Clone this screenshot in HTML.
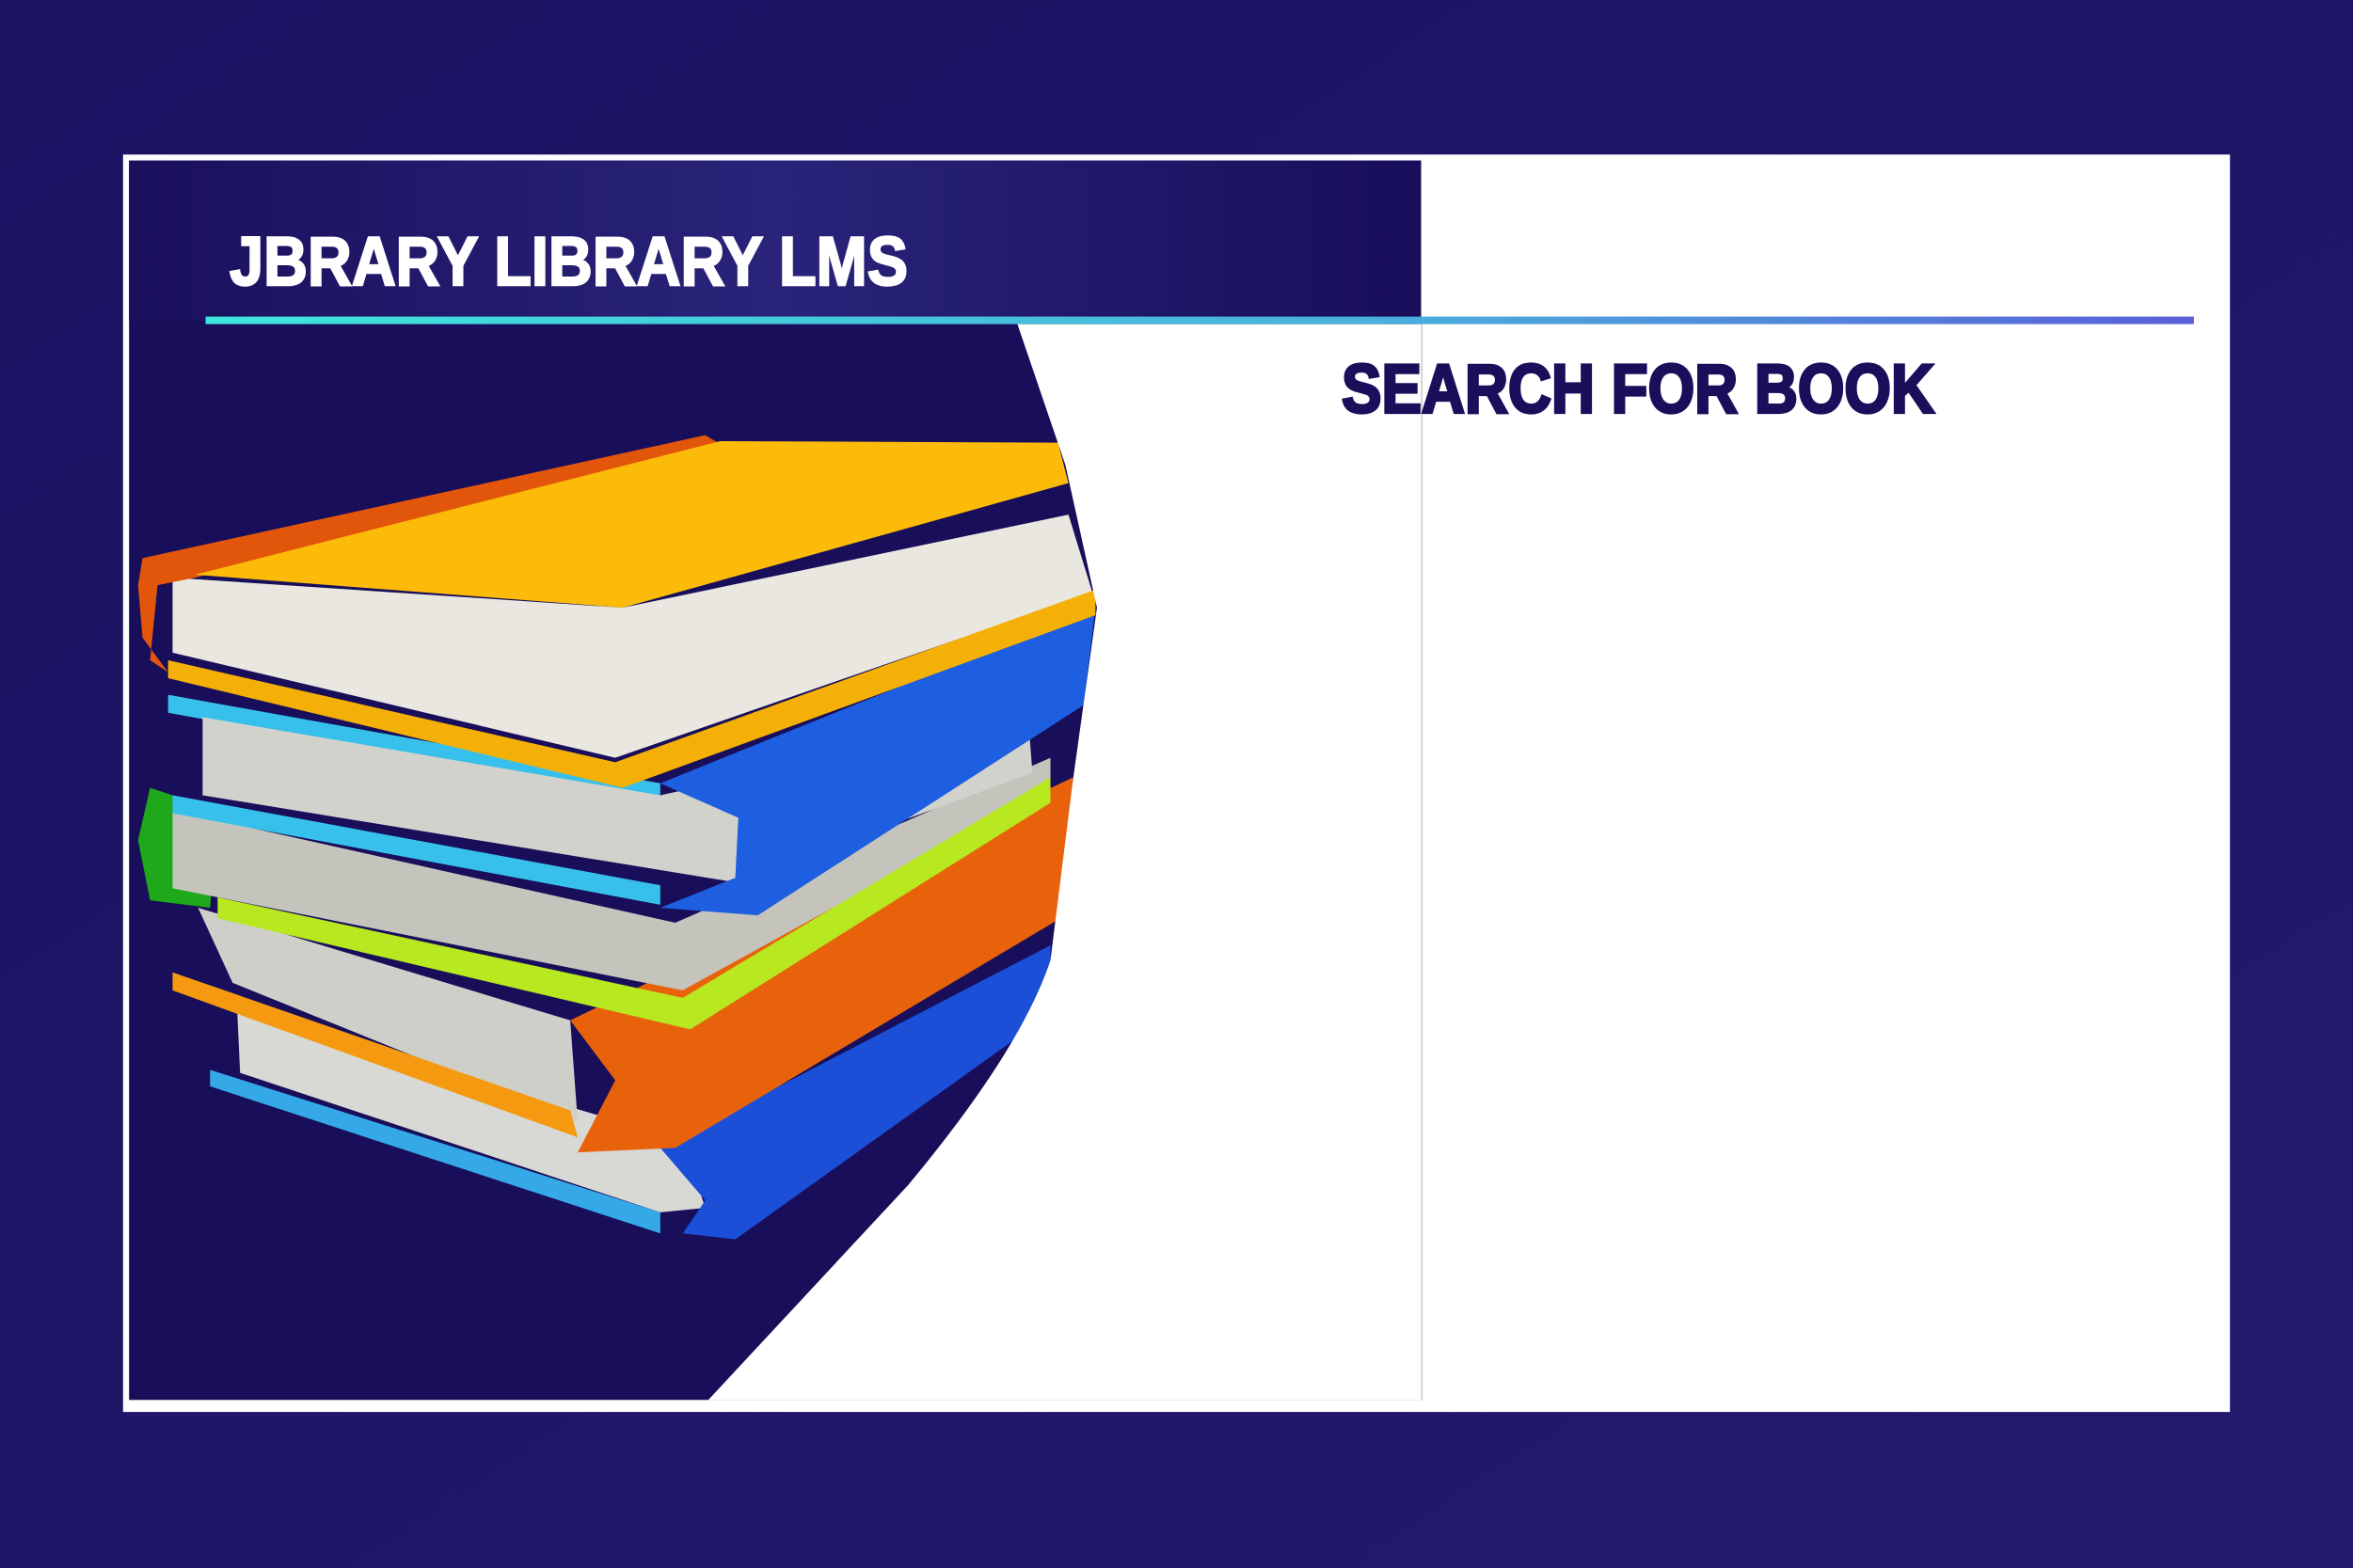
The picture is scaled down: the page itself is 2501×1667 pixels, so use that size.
<!DOCTYPE html>
<html><head><meta charset="utf-8"><style>
html,body{margin:0;padding:0;width:2501px;height:1667px;overflow:hidden;background:#1e1464}
svg{display:block}
</style></head><body>
<svg width="2501" height="1667" viewBox="0 0 1568 1045" preserveAspectRatio="none" xmlns="http://www.w3.org/2000/svg">
<defs>
<linearGradient id="bg" x1="0" y1="0" x2="1" y2="1"><stop offset="0" stop-color="#1c1262"/><stop offset="1" stop-color="#231a6e"/></linearGradient>
<linearGradient id="hd" x1="0" y1="0" x2="1" y2="0"><stop offset="0" stop-color="#1a105c"/><stop offset="0.5" stop-color="#29247a"/><stop offset="1" stop-color="#180e5a"/></linearGradient>
<linearGradient id="ln" x1="0" y1="0" x2="1" y2="0"><stop offset="0" stop-color="#3ee6dc"/><stop offset="0.6" stop-color="#4aaedc"/><stop offset="1" stop-color="#5a5fd8"/></linearGradient>
</defs>
<rect width="1568" height="1045" fill="url(#bg)"/>
<rect x="82" y="103" width="1404" height="838" fill="#fff"/>
<rect x="86" y="107" width="861" height="826" fill="#180e5a"/>
<rect x="86" y="107" width="861" height="107" fill="url(#hd)"/>
<line x1="947.5" y1="215" x2="947.5" y2="933" stroke="#ccc" stroke-width="1"/>
<g>
<polygon points="140,713 440,808 440,822 140,724" fill="#35a8e8"/>
<polygon points="158,672 455,760 470,805 440,808 160,715" fill="#d8d8d4"/>
<polygon points="440,765 700,630 700,650 680,690 490,826 455,822 470,800" fill="#1c4fd8"/>
<polygon points="132,605 380,680 385,748 155,655" fill="#cfcfca"/>
<polygon points="115,648 380,740 385,758 115,660" fill="#f59a10"/>
<polygon points="380,680 715,518 710,610 450,765 385,768 410,720" fill="#e8620c"/>
<polygon points="100,525 145,540 140,605 100,600 92,560" fill="#1ea81a"/>
<polygon points="115,540 450,615 700,505 700,525 455,660 115,592" fill="#c4c4bd"/>
<polygon points="145,598 455,665 700,518 700,535 460,686 145,612" fill="#b7e820"/>
<polygon points="112,463 440,522 440,535 112,475" fill="#38c0ec"/>
<polygon points="135,478 440,530 685,476 688,515 490,588 135,530" fill="#d2d2cc"/>
<polygon points="115,530 440,590 440,603 115,542" fill="#38c0ec"/>
<polygon points="440,522 730,405 722,470 505,610 440,605 490,585 492,545" fill="#1e5ee0"/>
<polygon points="115,385 415,405 712,343 728,395 410,505 115,435" fill="#e9e7e0"/>
<polygon points="95,372 470,290 480,296 130,385 105,390 100,440 112,448 95,425 92,390" fill="#e2560c"/>
<polygon points="130,383 480,294 705,295 712,322 415,405" fill="#fbbb08"/>
<polygon points="112,440 410,508 730,393 730,410 415,525 112,452" fill="#f4b006"/>
</g>
<path d="M678,216 L710,310 L731,405 L715,520 L700,640 Q680,700 605,790 L472,933 L947,933 L947,216 Z" fill="#fff"/>
<rect x="137" y="211" width="1325" height="5" fill="url(#ln)"/>
<text x="153" y="190" font-family="Liberation Sans, sans-serif" font-weight="bold" font-size="46" fill="#fff" stroke="#fff" stroke-width="1.5" textLength="452" lengthAdjust="spacingAndGlyphs">JBRARY LIBRARY LMS</text>
<text x="894" y="275" font-family="Liberation Sans, sans-serif" font-weight="bold" font-size="46" fill="#1a0f5a" stroke="#1a0f5a" stroke-width="2" textLength="395" lengthAdjust="spacingAndGlyphs">SEARCH FOR BOOK</text>
</svg>
</body></html>
